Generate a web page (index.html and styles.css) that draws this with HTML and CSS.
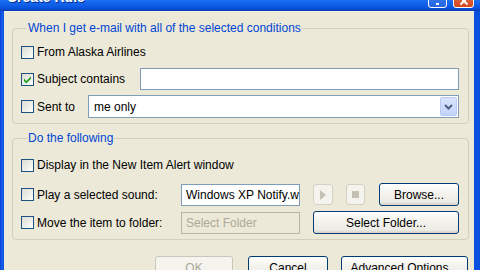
FILE: index.html
```
<!DOCTYPE html>
<html>
<head>
<meta charset="utf-8">
<link rel="stylesheet" href="styles.css">
</head>
<body>
<div class="window">
  <div class="titlebar">
    <span class="title">Create Rule</span>
    <div class="tbtns">
      <span class="tb tb-min"><span class="dash"></span></span>
      <span class="tb tb-close"><svg viewBox="0 0 10 10" width="10" height="10"><path d="M1.5 1.5 L8.5 8.5 M8.5 1.5 L1.5 8.5" stroke="#fff" stroke-width="2"/></svg></span>
    </div>
  </div>
  <div class="client">
    <fieldset class="group g1">
      <legend>When I get e-mail with all of the selected conditions</legend>
      <div class="row r1">
        <span class="cb"></span><span class="lbl">From Alaska Airlines</span>
      </div>
      <div class="row r2">
        <span class="cb checked"><svg viewBox="0 0 11 11" width="11" height="11"><path d="M2 4.6 L4.3 7 L9 2.2 L9 4.8 L4.3 9.6 L2 7.2 Z" fill="#21A121"/></svg></span>
        <span class="lbl w-subject">Subject contains</span>
        <span class="textbox subject"></span>
      </div>
      <div class="row r3">
        <span class="cb"></span><span class="lbl w-sent">Sent to</span>
        <span class="combo"><span class="combo-text">me only</span><span class="ddbtn"><svg viewBox="0 0 9 6" width="9" height="6"><path d="M1 1 L4.5 4.5 L8 1" stroke="#4D6185" stroke-width="2" fill="none"/></svg></span></span>
      </div>
    </fieldset>
    <fieldset class="group g2">
      <legend>Do the following</legend>
      <div class="row r4">
        <span class="cb"></span><span class="lbl">Display in the New Item Alert window</span>
      </div>
      <div class="row r5">
        <span class="cb"></span><span class="lbl w-action">Play a selected sound:</span>
        <span class="textbox sound"><span class="tb-text">Windows XP Notify.wav</span></span>
        <span class="btn icon-btn play"><svg viewBox="0 0 6 10" width="6" height="10"><path d="M0 0 L6 5 L0 10 Z" fill="#C4C0B2"/></svg></span>
        <span class="btn icon-btn stop"><span class="sq"></span></span>
        <span class="btn browse">Browse...</span>
      </div>
      <div class="row r6">
        <span class="cb"></span><span class="lbl w-action">Move the item to folder:</span>
        <span class="textbox folder disabled"><span class="tb-text">Select Folder</span></span>
        <span class="btn selfolder">Select Folder...</span>
      </div>
    </fieldset>
    <div class="footer">
      <span class="btn fbtn ok disabled">OK</span>
      <span class="btn fbtn cancel">Cancel</span>
      <span class="btn fbtn adv">Advanced Options...</span>
    </div>
  </div>
</div>
</body>
</html>
```
FILE: styles.css
```
html, body {
  margin: 0;
  padding: 0;
  width: 480px;
  height: 270px;
  overflow: hidden;
  background: #0A5FE8;
}
body {
  font-family: "Liberation Sans", Arial, sans-serif;
  font-size: 12px;
  color: #000;
}
.window {
  width: 480px;
  height: 270px;
  display: flex;
  flex-direction: column;
  background: linear-gradient(90deg, #0A3FD0 0px, #1560EE 2px, #0A50E0 4px);
}
.titlebar {
  height: 10px;
  flex: none;
  display: flex;
  align-items: flex-end;
  justify-content: space-between;
  overflow: hidden;
  background: linear-gradient(#1C6FF2, #0B58E3 70%, #0847C9);
  border-bottom: 1px solid #0A3BB5;
}
.title {
  color: #fff;
  font-weight: bold;
  font-size: 14px;
  line-height: 14px;
  margin: 0 0 6px 7px;
  text-shadow: 1px 1px 0 #0A2A8E;
}
.tbtns {
  display: flex;
  gap: 6px;
  margin: 0 6px 2px 0;
}
.tb {
  width: 19px;
  height: 20px;
  border: 1px solid #fff;
  border-radius: 3px;
  box-sizing: border-box;
  display: flex;
  align-items: flex-end;
  justify-content: center;
}
.tb-min {
  background: linear-gradient(#3C8CF8, #2663E0);
}
.tb-min .dash {
  width: 3px;
  height: 2px;
  background: #fff;
  margin-bottom: 2px;
}
.tb-close {
  width: 21px;
  background: linear-gradient(#E9775A, #D3481F);
}
.tb-close svg {
  margin-bottom: 1px;
}
.client {
  flex: 1;
  margin: 0 6px 0 4px;
  background: #ECE9D8;
  padding: 10px 5px 0 8px;
  border-top: 1px solid #F4F2E8;
}
.group {
  margin: 0;
  border: 1px solid #D0D0BF;
  border-radius: 4px;
  padding: 0 9px 5px 8px;
  min-width: 0;
}
.group legend {
  color: #0046D5;
  padding: 0 1px;
  margin-left: 6px;
  line-height: 12px;
  height: 12px;
}
.g1 {
  padding-top: 7px;
}
.g2 {
  margin-top: 8px;
  padding-top: 10px;
}
.row {
  display: flex;
  align-items: center;
  height: 22px;
}
.r2, .r3 {
  margin-top: 5px;
}
.r3 { height: 23px; }
.r5 { margin-top: 7px; height: 23px; }
.r6 { margin-top: 5px; height: 23px; }
.cb {
  width: 13px;
  height: 13px;
  box-sizing: border-box;
  border: 1px solid #1C5180;
  background: linear-gradient(135deg, #DCDCD4, #F4F4F0 70%, #FFFFFF);
  flex: none;
  display: flex;
  align-items: center;
  justify-content: center;
}
.lbl {
  margin-left: 3px;
  white-space: nowrap;
}
.w-subject { width: 103px; flex: none; }
.w-sent { width: 51px; flex: none; }
.w-action { width: 144px; flex: none; }
.textbox {
  height: 22px;
  box-sizing: border-box;
  border: 1px solid #7F9DB9;
  background: #fff;
  display: flex;
  align-items: center;
  overflow: hidden;
}
.subject {
  flex: 1;
  height: 22px;
}
.combo {
  flex: 1;
  height: 23px;
  box-sizing: border-box;
  border: 1px solid #7F9DB9;
  background: #fff;
  display: flex;
  align-items: center;
  justify-content: space-between;
  padding: 0 1px 0 5px;
}
.ddbtn {
  width: 17px;
  height: 19px;
  box-sizing: border-box;
  border: 1px solid #B9CAF5;
  border-radius: 2px;
  background: linear-gradient(#D9E4FB, #C3D3FA);
  display: flex;
  align-items: center;
  justify-content: center;
}
.sound, .folder {
  width: 119px;
  flex: none;
}
.tb-text {
  padding-left: 4px;
  white-space: nowrap;
}
.textbox.disabled {
  background: #ECE9D8;
  border-color: #B5B5AA;
  color: #ACA899;
}
.btn {
  box-sizing: border-box;
  border: 1px solid #003C74;
  border-radius: 3px;
  background: linear-gradient(#FFFFFF, #F4F3EE 40%, #ECEBE6 85%, #D6D0C5);
  display: flex;
  align-items: center;
  justify-content: center;
  white-space: nowrap;
  flex: none;
}
.icon-btn {
  width: 20px;
  height: 21px;
  border-color: #D4D0C2;
  background: #F4F3EE;
}
.play { margin-left: 13px; }
.stop { margin-left: 13px; width: 19px; }
.stop .sq {
  width: 7px;
  height: 7px;
  background: #C4C0B2;
}
.browse {
  margin-left: 14px;
  width: 80px;
  height: 23px;
}
.selfolder {
  margin-left: 13px;
  flex: 1;
  height: 23px;
}
.footer {
  display: flex;
  margin-top: 16px;
  padding-left: 143px;
}
.fbtn {
  height: 23px;
}
.ok { width: 78px; }
.cancel { width: 80px; margin-left: 15px; }
.adv { width: 127px; margin-left: 13px; }
.btn.disabled {
  border-color: #C9C7BA;
  color: #ACA899;
  background: #F4F3EE;
}
```
